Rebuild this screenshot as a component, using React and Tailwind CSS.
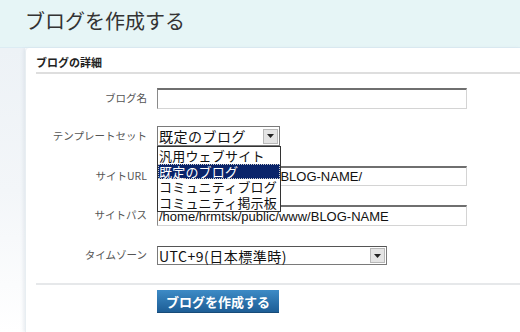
import React from "react";

const jp = { fontFamily: '"Noto Sans CJK JP", "Noto Sans", sans-serif' };

function Arrow() {
  return (
    <div className="w-[15px] h-[15px] bg-[#e4e4e4] border border-[#b8b8b8] flex items-center justify-center">
      <svg width="7" height="4" viewBox="0 0 7 4"><path d="M0 0h7L3.5 4z" fill="#222" /></svg>
    </div>
  );
}

function Label({ children, h }) {
  return (
    <div className={`w-[111px] shrink-0 text-right text-[10.5px] text-[#555] leading-none flex items-center justify-end ${h}`}>{children}</div>
  );
}

function TextInput({ value, h }) {
  return (
    <div className={`w-[310px] ${h} border-t-2 border-l border-t-[#6f6f6f] border-l-[#8a8a8a] border-b border-r border-b-[#d4d4d4] border-r-[#d4d4d4] bg-white text-[13px] text-[#111] leading-none flex items-center pl-[1px] overflow-hidden whitespace-nowrap`} style={{ fontFamily: '"Liberation Sans", "Noto Sans CJK JP", sans-serif' }}>
      {value}
    </div>
  );
}

export default function App() {
  return (
    <div className="w-[520px] h-[332px] overflow-hidden bg-white flex flex-col" style={jp}>
      <div className="h-[48px] shrink-0 bg-[#e6f5f6] border-b border-b-[#dcecf3] pl-[25px] pt-[7px]">
        <div className="text-[20px] leading-[28px] text-[#333]">ブログを作成する</div>
      </div>
      <div className="flex flex-1">
        <div className="w-[25px] shrink-0 bg-gradient-to-b from-[#edf2f6] via-[#f3f6f9] to-white" />
        <div className="flex-1 bg-white rounded-tl-[4px] border-l border-l-[#e8eef2] shadow-[-2px_0_3px_rgba(200,210,220,0.35)] relative">
          <div className="pl-[10px] pt-[4px]">
            <div className="h-[22px] flex items-center text-[11px] font-bold text-[#222] border-b-2 border-b-[#dedede]">ブログの詳細</div>

            <div className="flex gap-[10px] mt-[14px]">
              <Label h="h-[21px]">ブログ名</Label>
              <TextInput value="" h="h-[21px]" />
            </div>

            <div className="flex gap-[10px] mt-[17px] relative">
              <Label h="h-[20px]">テンプレートセット</Label>
              <div className="relative">
                <div className="w-[123px] h-[20px] border border-[#7a7a7a] bg-white flex items-center justify-between pl-[1px] pr-[1px]">
                  <span className="text-[14px] tracking-[0.5px] leading-none text-[#111]">既定のブログ</span>
                  <Arrow />
                </div>
                <div className="absolute left-0 top-[20px] w-[124px] border border-[#333] bg-white z-10 py-[1px] text-[13px] tracking-[0.2px] leading-[15.5px] text-[#111] whitespace-nowrap">
                  <div className="pl-[1px] h-[15.5px]">汎用ウェブサイト</div>
                  <div className="pl-[1px] h-[15.5px] bg-[#0a246a] text-white outline-1 outline-dotted outline-[#ccc] -outline-offset-1">既定のブログ</div>
                  <div className="pl-[1px] h-[15.5px]">コミュニティブログ</div>
                  <div className="pl-[1px] h-[15.5px]">コミュニティ掲示板</div>
                </div>
              </div>
            </div>

            <div className="flex gap-[10px] mt-[20px]">
              <Label h="h-[20px]">サイトURL</Label>
              <TextInput value="http://hrmtsk.domain/BLOG-NAME/" h="h-[20px]" />
            </div>

            <div className="flex gap-[10px] mt-[19px]">
              <Label h="h-[21px]">サイトパス</Label>
              <TextInput value="/home/hrmtsk/public/www/BLOG-NAME" h="h-[21px]" />
            </div>

            <div className="flex gap-[10px] mt-[20px]">
              <Label h="h-[19px]">タイムゾーン</Label>
              <div className="w-[230px] h-[19px] border border-[#7a7a7a] border-t-[#555] bg-white flex items-center justify-between pl-[1px] pr-[1px]">
                <span className="text-[14px] tracking-[0.5px] leading-none text-[#111]">UTC+9(日本標準時)</span>
                <Arrow />
              </div>
            </div>

            <div className="mt-[18px] border-t-2 border-t-[#e6e8ea]" />

            <div className="flex mt-[5px] pl-[121px]">
              <button className="w-[122px] h-[23px] bg-gradient-to-b from-[#3d8bc6] to-[#1d5e96] text-white text-[13px] font-bold leading-none border-b border-b-[#174b78]">ブログを作成する</button>
            </div>
          </div>
        </div>
      </div>
    </div>
  );
}
